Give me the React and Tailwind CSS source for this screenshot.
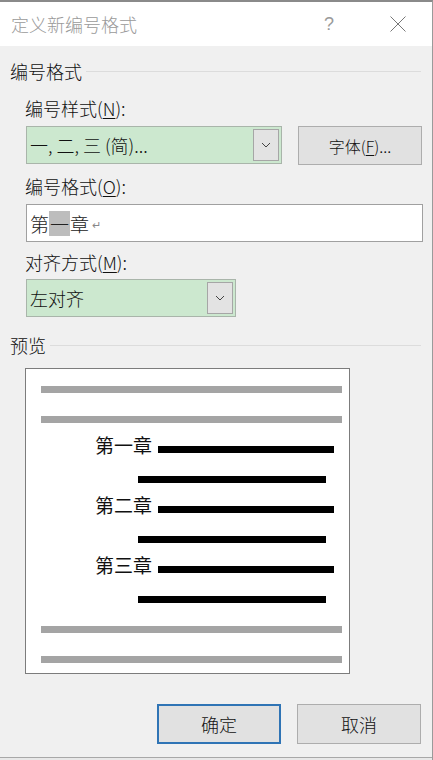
import React from "react";

const font = { fontFamily: '"Noto Sans CJK SC", "Liberation Sans", sans-serif' };

const Chevron = () => (
  <svg width="10" height="6" viewBox="0 0 10 6" fill="none">
    <path d="M1 1 L5 5 L9 1" stroke="#444" strokeWidth="1" />
  </svg>
);

const Combo = ({ text, width }) => (
  <div className={`${width} h-[38px] bg-[#cce8cf] border border-[#a9b5aa] flex items-center justify-between pl-[3px] pr-[2px]`}>
    <span className="text-[18px] text-[#111]">{text}</span>
    <div className="w-[26px] h-[32px] bg-[#e3e3e3] border border-[#a6a6a6] flex items-center justify-center">
      <Chevron />
    </div>
  </div>
);

const GroupHeader = ({ title }) => (
  <div className="flex items-center pl-[10px] pr-[11px]">
    <span className="text-[18px] leading-[22px] text-[#111]">{title}</span>
    <div className="flex-1 h-px bg-[#dcdcdc] ml-[4px]" />
  </div>
);

const Label = ({ children, className }) => (
  <div className={`pl-[25px] text-[18px] leading-[22px] text-[#111] ${className}`}>{children}</div>
);

const GrayBar = () => <div className="ml-[15px] w-[301px] h-[7px] bg-[#a4a4a4]" />;

const Chapter = ({ name }) => (
  <>
    <div className="flex items-end h-[7px]">
      <span className="w-[132px] pr-[6px] text-right text-[19px] leading-[19px] font-normal text-[#111] mb-[-1px]">{name}</span>
      <div className="w-[176px] h-[7px] bg-black" />
    </div>
    <div className="ml-[112px] w-[188px] h-[7px] bg-black" />
  </>
);

export default function App() {
  return (
    <div style={font} className="w-[433px] h-[760px] bg-[#f0f0f0] flex flex-col border-t-2 border-t-[#8a8a8a] border-r border-r-[#9a9a9a] overflow-hidden font-light">
      <div className="h-[44px] bg-white flex items-center pl-[11px] shrink-0">
        <span className="text-[18px] text-[#9a9a9a] flex-1">定义新编号格式</span>
        <span className="text-[18px] text-[#9a9a9a] mr-[56px]" style={{ fontFamily: '"Liberation Sans", sans-serif' }}>?</span>
        <svg width="16" height="16" viewBox="0 0 16 16" className="mr-[26px]">
          <path d="M0.5 0.5 L15.5 15.5 M15.5 0.5 L0.5 15.5" stroke="#777" strokeWidth="1" />
        </svg>
      </div>

      <div className="mt-[14px]">
        <GroupHeader title="编号格式" />
      </div>
      <Label className="mt-[15px]">
        编号样式(<span className="underline underline-offset-2">N</span>):
      </Label>
      <div className="flex pl-[26px] mt-[7px] gap-[16px]">
        <Combo text="一, 二, 三 (简)..." width="w-[256px]" />
        <button className="w-[124px] h-[39px] bg-[#e1e1e1] border border-[#adadad] text-[16px] text-[#111]">
          字体(<span className="underline underline-offset-2">F</span>)...
        </button>
      </div>

      <Label className="mt-[10px]">
        编号格式(<span className="underline underline-offset-2">O</span>):
      </Label>
      <div className="ml-[26px] mt-[7px] w-[397px] h-[38px] bg-white border border-[#a0a0a0] flex items-center pl-[3px]">
        <span className="text-[19px] leading-[25px] text-[#222]">第</span>
        <span className="text-[19px] leading-[25px] text-[#222] bg-[#bdbdbd] px-[1px]">一</span>
        <span className="text-[19px] leading-[25px] text-[#222]">章</span>
        <span className="text-[11px] text-[#888] ml-[3px] mt-[2px]">↵</span>
      </div>

      <Label className="mt-[9px]">
        对齐方式(<span className="underline underline-offset-2">M</span>):
      </Label>
      <div className="pl-[26px] mt-[6px]">
        <Combo text="左对齐" width="w-[210px]" />
      </div>

      <div className="mt-[17px]">
        <GroupHeader title="预览" />
      </div>

      <div className="ml-[25px] mt-[12px] w-[325px] h-[306px] bg-white border border-[#7c7c7c] flex flex-col gap-[23px] pt-[17px]">
        <GrayBar />
        <GrayBar />
        <Chapter name="第一章" />
        <Chapter name="第二章" />
        <Chapter name="第三章" />
        <GrayBar />
        <GrayBar />
      </div>

      <div className="flex justify-end gap-[16px] pr-[11px] mt-[30px]">
        <button className="w-[124px] h-[40px] bg-[#e1e1e1] border-2 border-[#2f74b5] text-[18px] text-[#111]">确定</button>
        <button className="w-[124px] h-[40px] bg-[#e1e1e1] border border-[#adadad] text-[18px] text-[#111]">取消</button>
      </div>

      <div className="flex-1" />
      <div className="h-px bg-[#a8a8a8] shrink-0" />
      <div className="h-[2px] bg-[#e8e8e8] shrink-0" />
    </div>
  );
}
